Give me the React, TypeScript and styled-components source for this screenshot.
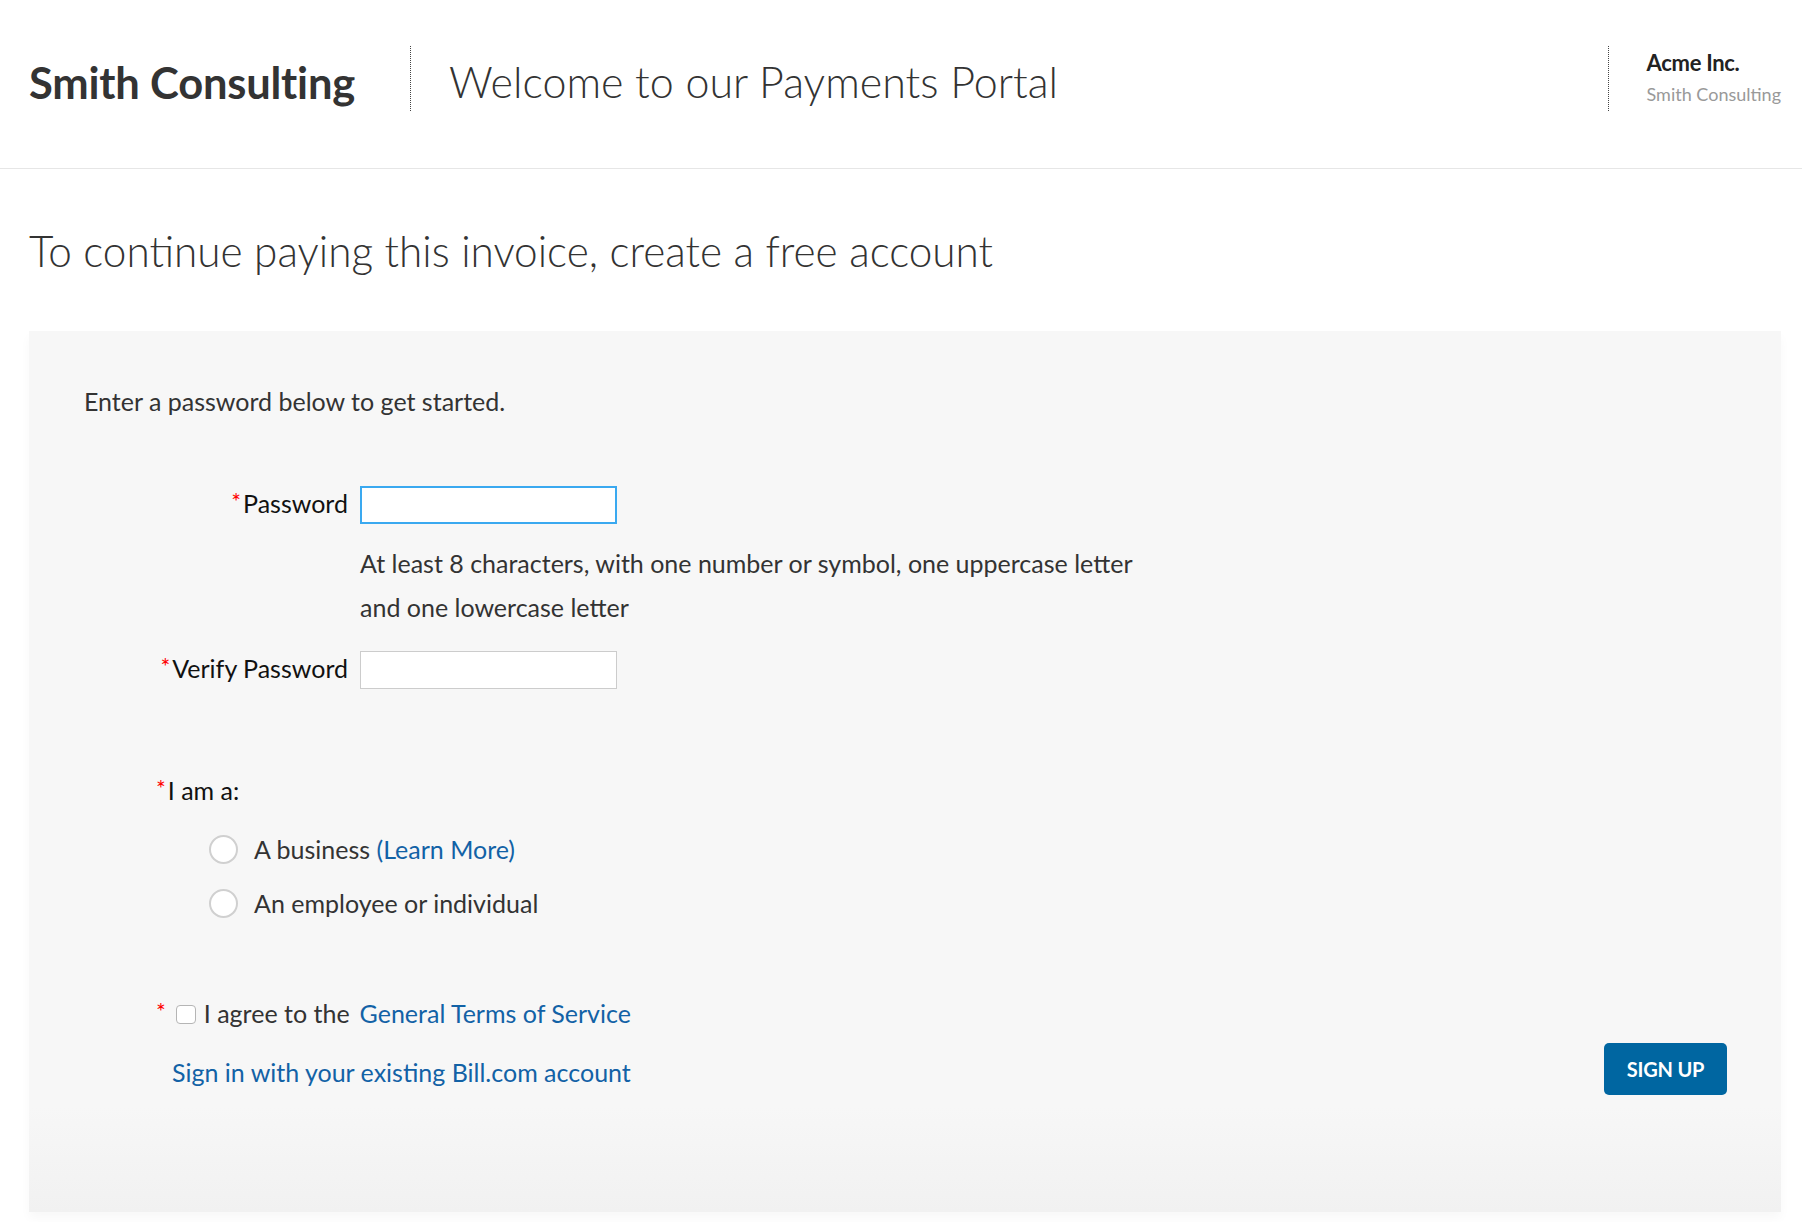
import React from "react";
import styled, { createGlobalStyle } from "styled-components";

const Global = createGlobalStyle`
  html, body { margin: 0; padding: 0; background: #ffffff; }
  body { font-family: Lato, "Open Sans", "Liberation Sans", sans-serif; color: #333333; }
  * { box-sizing: border-box; }
`;

const Page = styled.div`
  width: 1802px;
  min-height: 1222px;
  background: #ffffff;
  overflow: hidden;
`;

const Header = styled.header`
  display: flex;
  align-items: center;
  height: 169px;
  padding: 0 21px 0 29px;
  border-bottom: 1px solid #e6e6e6;
`;

const Logo = styled.div`
  font-size: 43.5px;
  font-weight: 700;
  color: #333333;
  letter-spacing: -0.2px;
  margin-bottom: 5px;
`;

const Divider = styled.div<{ $left?: number }>`
  width: 0;
  height: 65px;
  border-left: 1px dotted #444444;
  margin: 0 38px 11px ${(p) => p.$left ?? 0}px;
`;

const Welcome = styled.div`
  font-size: 43px;
  font-weight: 300;
  color: #333333;
  margin-bottom: 5px;
`;

const Spacer = styled.div`
  flex: 1;
`;

const Account = styled.div`
  display: flex;
  flex-direction: column;
  gap: 6px;
  margin-bottom: 12px;
`;

const AccountName = styled.div`
  font-size: 22px;
  line-height: 26px;
  font-weight: 700;
  color: #222222;
  letter-spacing: -0.3px;
`;

const AccountSub = styled.div`
  font-size: 18px;
  line-height: 24px;
  font-weight: 400;
  color: #999999;
`;

const Title = styled.h1`
  margin: 0;
  padding: 56px 0 0 29px;
  height: 162px;
  font-size: 42.3px;
  font-weight: 300;
  color: #333333;
  line-height: 52px;
`;

const Panel = styled.section`
  margin: 0 21px 0 29px;
  padding: 55px 54px 117px 55px;
  background: linear-gradient(to bottom, #f7f7f7 0%, #f7f7f7 88%, #f1f1f1 100%);
  box-shadow: 0 6px 10px rgba(0, 0, 0, 0.03);
`;

const Intro = styled.p`
  margin: 0;
  font-size: 25px;
  line-height: 30px;
  color: #333333;
`;

const FieldRow = styled.div<{ $top: number }>`
  display: grid;
  grid-template-columns: 264px 257px;
  column-gap: 12px;
  align-items: center;
  margin-top: ${(p) => p.$top}px;
`;

const Label = styled.label`
  justify-self: end;
  font-size: 25px;
  line-height: 30px;
  color: #111111;
  margin-top: -4px;
`;

const Star = styled.span`
  display: inline-block;
  color: #ff0000;
  font-size: 23px;
  line-height: 20px;
  vertical-align: 3px;
  margin-right: 2px;
`;

const Input = styled.input<{ $focused?: boolean }>`
  width: 257px;
  height: 38px;
  margin: 0;
  padding: 0 8px;
  background: #ffffff;
  border: 1px solid ${(p) => (p.$focused ? "#3aa9f0" : "#cccccc")};
  box-shadow: ${(p) => (p.$focused ? "inset 0 0 0 1px #3aa9f0" : "none")};
  border-radius: 0;
  font-family: Lato, sans-serif;
  font-size: 18px;
  outline: none;
`;

const Hint = styled.p`
  margin: 17px 0 0 276px;
  font-size: 25px;
  line-height: 44px;
  color: #333333;
  max-width: 800px;
`;

const GroupLabel = styled.div`
  margin: 86px 0 0 72px;
  font-size: 25px;
  line-height: 30px;
  color: #111111;
`;

const RadioList = styled.div`
  display: flex;
  flex-direction: column;
  gap: 24px;
  margin: 29px 0 0 125px;
`;

const RadioRow = styled.label`
  display: flex;
  align-items: center;
  gap: 16px;
  height: 30px;
  font-size: 25px;
  color: #333333;
`;

const RadioCircle = styled.span`
  display: inline-block;
  flex: none;
  width: 29px;
  height: 29px;
  border-radius: 50%;
  background: #ffffff;
  border: 2px solid #d0d0d0;
`;

const Link = styled.a`
  color: #1262a6;
  text-decoration: none;
`;

const TermsLink = styled(Link)`
  margin-left: 10px;
`;

const AgreeRow = styled.div`
  display: flex;
  align-items: center;
  height: 30px;
  margin: 80px 0 0 72px;
  font-size: 25px;
  color: #333333;
`;

const AgreeStar = styled.span`
  color: #ff0000;
  font-size: 23px;
  align-self: flex-start;
  line-height: 20px;
  margin: 3px 10px 0 0;
`;

const Checkbox = styled.span`
  display: inline-block;
  flex: none;
  width: 20px;
  height: 19px;
  border: 1px solid #b5b5b5;
  border-radius: 4px;
  background: #ffffff;
  margin: 2px 8px 0 0;
`;

const BottomRow = styled.div`
  display: flex;
  align-items: center;
  justify-content: space-between;
  margin: 15px 0 0 88px;
`;

const SignIn = styled(Link)`
  font-size: 25px;
  padding-top: 6px;
`;

const Button = styled.button`
  width: 123px;
  height: 52px;
  border: none;
  border-radius: 5px;
  background: #0066a1;
  color: #ffffff;
  font-family: Lato, sans-serif;
  font-weight: 700;
  font-size: 20px;
  letter-spacing: -0.2px;
  cursor: pointer;
`;

export default function App() {
  return (
    <Page>
      <Global />
      <Header>
        <Logo>Smith Consulting</Logo>
        <Divider $left={55} />
        <Welcome>Welcome to our Payments Portal</Welcome>
        <Spacer />
        <Divider />
        <Account>
          <AccountName>Acme Inc.</AccountName>
          <AccountSub>Smith Consulting</AccountSub>
        </Account>
      </Header>
      <Title>To continue paying this invoice, create a free account</Title>
      <Panel>
        <Intro>Enter a password below to get started.</Intro>
        <FieldRow $top={70}>
          <Label>
            <Star>*</Star>Password
          </Label>
          <Input type="password" $focused />
        </FieldRow>
        <Hint>
          At least 8 characters, with one number or symbol, one uppercase letter and one lowercase letter
        </Hint>
        <FieldRow $top={22}>
          <Label>
            <Star>*</Star>Verify Password
          </Label>
          <Input type="password" />
        </FieldRow>
        <GroupLabel>
          <Star>*</Star>I am a:
        </GroupLabel>
        <RadioList>
          <RadioRow>
            <RadioCircle />
            <span>
              A business <Link href="#">(Learn More)</Link>
            </span>
          </RadioRow>
          <RadioRow>
            <RadioCircle />
            <span>An employee or individual</span>
          </RadioRow>
        </RadioList>
        <AgreeRow>
          <AgreeStar>*</AgreeStar>
          <Checkbox />
          <span>I agree to the</span>
          <TermsLink href="#">General Terms of Service</TermsLink>
        </AgreeRow>
        <BottomRow>
          <SignIn href="#">Sign in with your existing Bill.com account</SignIn>
          <Button>SIGN UP</Button>
        </BottomRow>
      </Panel>
    </Page>
  );
}
